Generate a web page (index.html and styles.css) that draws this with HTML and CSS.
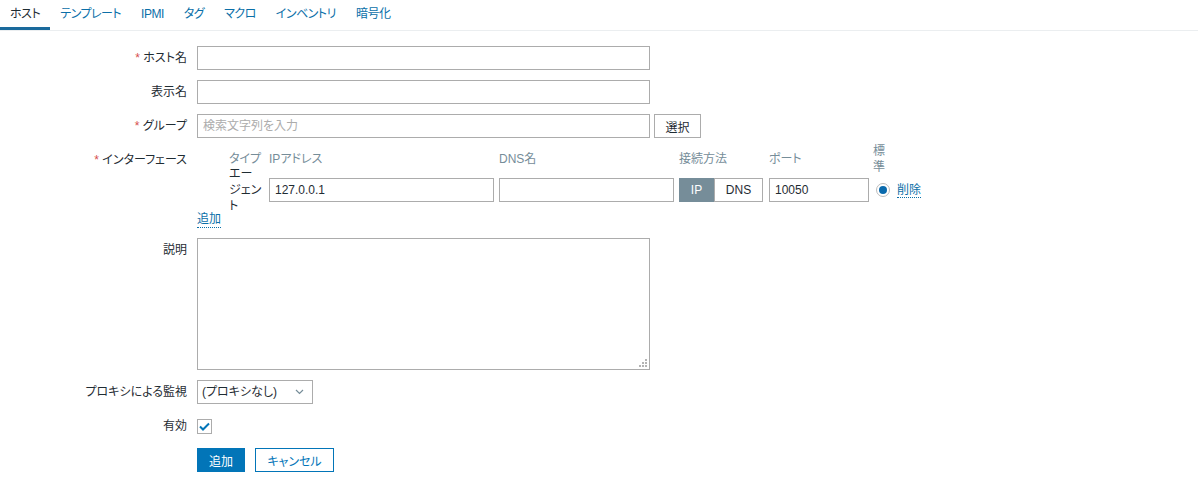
FILE: index.html
```html
<!DOCTYPE html>
<html lang="ja">
<head>
<meta charset="utf-8">
<title>ホスト</title>
<link rel="stylesheet" href="styles.css">
</head>
<body>
<nav class="tabs">
  <ul class="tab-list">
    <li class="tab active"><a>ホスト</a></li>
    <li class="tab"><a>テンプレート</a></li>
    <li class="tab"><a>IPMI</a></li>
    <li class="tab"><a>タグ</a></li>
    <li class="tab"><a>マクロ</a></li>
    <li class="tab"><a>インベントリ</a></li>
    <li class="tab"><a>暗号化</a></li>
  </ul>
</nav>
<form class="form">
  <div class="row">
    <label class="lbl"><span class="req">*</span> ホスト名</label>
    <div class="field"><input class="text wide" type="text"></div>
  </div>
  <div class="row">
    <label class="lbl">表示名</label>
    <div class="field"><input class="text wide" type="text"></div>
  </div>
  <div class="row">
    <label class="lbl"><span class="req">*</span> グループ</label>
    <div class="field inline">
      <input class="text wide" type="text" placeholder="検索文字列を入力">
      <button type="button" class="btn-alt">選択</button>
    </div>
  </div>
  <div class="row row-iface">
    <label class="lbl lbl-iface"><span class="req">*</span> インターフェース</label>
    <div class="field">
      <div class="iface-head">
        <span></span>
        <span class="th">タイプ</span>
        <span class="th">IPアドレス</span>
        <span class="th">DNS名</span>
        <span class="th">接続方法</span>
        <span class="th">ポート</span>
        <span class="th th-def">標準</span>
      </div>
      <div class="iface-body">
        <span></span>
        <span class="type">エージェント</span>
        <input class="text ip" type="text" value="127.0.0.1">
        <input class="text dns" type="text">
        <div class="toggle">
          <span class="seg on">IP</span><span class="seg">DNS</span>
        </div>
        <input class="text port" type="text" value="10050">
        <span class="radio"><span class="dot"></span></span>
        <a class="link">削除</a>
      </div>
      <a class="link add">追加</a>
    </div>
  </div>
  <div class="row">
    <label class="lbl">説明</label>
    <div class="field">
      <div class="ta-wrap">
        <textarea class="ta"></textarea>
        <svg class="grip" width="8" height="8" viewBox="0 0 8 8">
          <rect x="6" y="0" width="2" height="2" fill="#b4b4b4"/>
          <rect x="3" y="3" width="2" height="2" fill="#b4b4b4"/>
          <rect x="6" y="3" width="2" height="2" fill="#b4b4b4"/>
          <rect x="0" y="6" width="2" height="2" fill="#b4b4b4"/>
          <rect x="3" y="6" width="2" height="2" fill="#b4b4b4"/>
          <rect x="6" y="6" width="2" height="2" fill="#b4b4b4"/>
        </svg>
      </div>
    </div>
  </div>
  <div class="row row-proxy">
    <label class="lbl">プロキシによる監視</label>
    <div class="field">
      <div class="sel-wrap">
        <select class="sel"><option>(プロキシなし)</option></select>
        <svg class="chev" width="9" height="6" viewBox="0 0 9 6"><path d="M1 1 L4.5 4.5 L8 1" fill="none" stroke="#768d99" stroke-width="1.2"/></svg>
      </div>
    </div>
  </div>
  <div class="row">
    <label class="lbl">有効</label>
    <div class="field center">
      <span class="check"><svg width="11" height="9" viewBox="0 0 11 9"><path d="M1 4.5 L4 7.5 L10 1.5" fill="none" stroke="#0275b8" stroke-width="2"/></svg></span>
    </div>
  </div>
  <div class="row">
    <span class="lbl"></span>
    <div class="field buttons">
      <button type="button" class="btn-primary">追加</button>
      <button type="button" class="btn-cancel">キャンセル</button>
    </div>
  </div>
</form>
</body>
</html>
```
FILE: styles.css
```css
* { box-sizing: border-box; }
body {
  margin: 0;
  background: #fff;
  color: #1f2c33;
  font-family: "Liberation Sans", Arial, "Noto Sans CJK JP", sans-serif;
  font-size: 12px;
  font-feature-settings: "palt";
}
.tabs { border-bottom: 1px solid #ebeef0; }
.tab-list { list-style: none; margin: 0; padding: 0; display: flex; }
.tab a {
  display: block;
  padding: 0 10px 0 10px;
  line-height: 28px;
  height: 30px;
  border-bottom: 3px solid transparent;
  color: #0b6fa8;
  letter-spacing: -0.5px;
}
.tab.active a { color: #1f2c33; border-bottom-color: #1a6a9c; }
.tabs { height: 31px; }

.form { padding-top: 15px; }
.row {
  display: grid;
  grid-template-columns: 187px auto;
  column-gap: 10px;
  margin-bottom: 10px;
  justify-content: start;
}
.lbl {
  text-align: right;
  line-height: 24px;
  white-space: nowrap;
}
.req { color: #d64e4e; }
.field.inline { display: flex; gap: 4px; align-items: center; }
.field.center { display: flex; align-items: center; height: 24px; }
.field.buttons { display: flex; gap: 10px; align-items: center; }
.text {
  height: 24px;
  border: 1px solid #acacac;
  padding: 0 5px;
  font: inherit;
  color: #1f2c33;
  background: #fff;
  outline: none;
}
.text::placeholder { color: #acacac; }
.wide { width: 453px; }
.btn-alt {
  height: 24px;
  width: 47px;
  border: 1px solid #acacac;
  background: #fff;
  color: #1f2c33;
  font: inherit;
  padding: 0;
}

/* interfaces */
.lbl-iface { line-height: 16px; padding-top: 4px; }
.iface-head, .iface-body {
  display: grid;
  grid-template-columns: 32px 40px 230px 180px 90px 104px 24px auto;
}
.iface-head { align-items: start; color: #768d99; }
.th { line-height: 16px; padding-top: 3px; }
.th-def { width: 14px; color: #768d99; padding-top: 0; margin-top: -5px; }
.iface-body { align-items: center; margin-top: -9px; min-height: 48px; }
.type { line-height: 16px; width: 38px; line-break: strict; }
.ip { width: 225px; }
.dns { width: 175px; }
.port { width: 100px; }
.toggle { display: flex; height: 24px; width: 84px; }
.seg {
  display: flex; align-items: center; justify-content: center;
  height: 24px;
  border: 1px solid #acacac;
  background: #fff;
  color: #1f2c33;
  width: 49px;
}
.seg.on { background: #768d99; border-color: #768d99; color: #fff; width: 35px; }
.radio {
  width: 14px; height: 14px;
  margin-left: 3px;
  border: 1px solid #bcbcbc;
  border-radius: 50%;
  display: flex; align-items: center; justify-content: center;
}
.dot { width: 8px; height: 8px; border-radius: 50%; background: #0a6aad; }
.link {
  color: #0b6fa8;
  border-bottom: 1px dotted #0b6fa8;
  line-height: 14px;
  justify-self: start;
}
.add { display: block; width: fit-content; margin-top: -2px; line-height: 15px; }

/* textarea */
.ta-wrap { position: relative; width: 453px; height: 132px; }
.ta {
  display: block;
  width: 453px; height: 132px;
  border: 1px solid #acacac;
  resize: none;
  font: inherit;
  outline: none;
}
.grip { position: absolute; right: 3px; bottom: 3px; }

/* proxy select */
.row-proxy { margin-top: 1px; }
.sel-wrap { position: relative; width: 116px; height: 24px; }
.sel {
  appearance: none;
  -webkit-appearance: none;
  width: 116px; height: 24px;
  border: 1px solid #acacac;
  background: #fff;
  font: inherit;
  color: #1f2c33;
  padding: 0 0 0 4px;
  outline: none;
}
.chev { position: absolute; right: 9px; top: 9px; pointer-events: none; }

.check {
  width: 15px; height: 15px;
  border: 1px solid #acacac;
  display: flex; align-items: center; justify-content: center;
  background: #fff;
}

.btn-primary {
  height: 24px; width: 48px;
  background: #0275b8; border: 1px solid #0275b8; color: #fff;
  font: inherit; padding: 0;
}
.btn-cancel {
  height: 24px; width: 79px;
  background: #fff; border: 1px solid #0275b8; color: #0275b8;
  font: inherit; padding: 0;
}
```
